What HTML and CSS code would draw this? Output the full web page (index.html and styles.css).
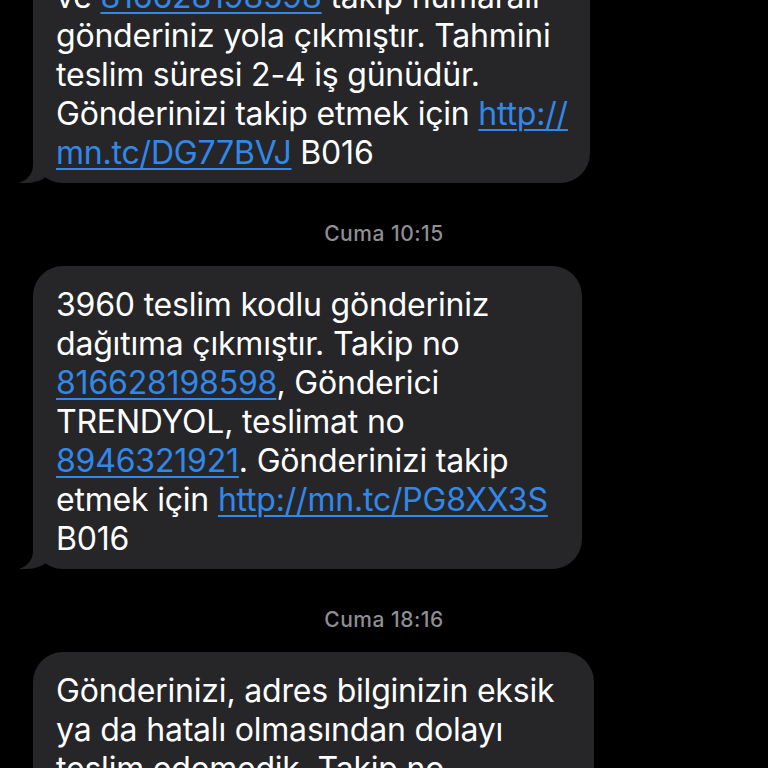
FILE: index.html
```html
<!DOCTYPE html>
<html lang="tr">
<head>
    <meta charset="UTF-8">
    <meta name="viewport" content="width=device-width, initial-scale=1.0">
    <title>Mesajlar</title>
    <link rel="stylesheet" href="styles.css">
</head>
<body>

    <div class="thread">

        <div class="bubble bubble-first">
            <p class="text">ve <a href="#">816628198598</a> takip numaralı<br>gönderiniz yola çıkmıştır. Tahmini<br>teslim süresi 2-4 iş günüdür.<br>Gönderinizi takip etmek için <a href="#">http://<br>mn.tc/DG77BVJ</a> B016</p>
        </div>

        <div class="stamp">Cuma 10:15</div>

        <div class="bubble bubble-second">
            <p class="text">3960 teslim kodlu gönderiniz<br>dağıtıma çıkmıştır. Takip no<br><a href="#">816628198598</a>, Gönderici<br>TRENDYOL, teslimat no<br><a href="#">8946321921</a>. Gönderinizi takip<br>etmek için <a href="#">http://mn.tc/PG8XX3S</a><br>B016</p>
        </div>

        <div class="stamp">Cuma 18:16</div>

        <div class="bubble bubble-third">
            <p class="text">Gönderinizi, adres bilginizin eksik<br>ya da hatalı olmasından dolayı<br>teslim edemedik. Takip no</p>
        </div>

    </div>

</body>
</html>
```

FILE: styles.css
```css
body {
    margin: 0;
    background: #000;
    color: #fff;
    font-family: 'Inter', 'Noto Sans', sans-serif;
    overflow: hidden;
}


.thread {
    display: flex;
    flex-direction: column;
    align-items: flex-start;
    margin-top: -42px;
    padding-left: 33px;
}


.bubble {
    position: relative;
    box-sizing: border-box;
    background: #262628;
    border-radius: 30px;
    padding: 19px 20px 11px 23px;
}

.bubble-first { width: 557px; }
.bubble-second { width: 549px; }
.bubble-third { width: 561px; }

/* tail, bottom left */
.bubble::before {
    content: "";
    position: absolute;
    bottom: 0;
    left: -13px;
    width: 36px;
    height: 36px;
    background: #262628;
    border-bottom-right-radius: 29px 25px;
}

.bubble::after {
    content: "";
    position: absolute;
    bottom: 0;
    left: -47px;
    width: 47px;
    height: 36px;
    background: #000;
    border-bottom-right-radius: 18px;
}

.text {
    position: relative;
    z-index: 1;
    margin: 0;
    font-size: 32px;
    line-height: 39px;
    letter-spacing: -0.2px;
    white-space: nowrap;
}

.text a {
    color: #3288ea;
    text-decoration: underline;
    text-decoration-thickness: 2px;
    text-underline-offset: 4px;
}


.stamp {
    align-self: center;
    margin: 39px 0 20px -33px;
    font-size: 21px;
    line-height: 24px;
    font-weight: 500;
    letter-spacing: 0.5px;
    color: #8e8e93;
}
```
